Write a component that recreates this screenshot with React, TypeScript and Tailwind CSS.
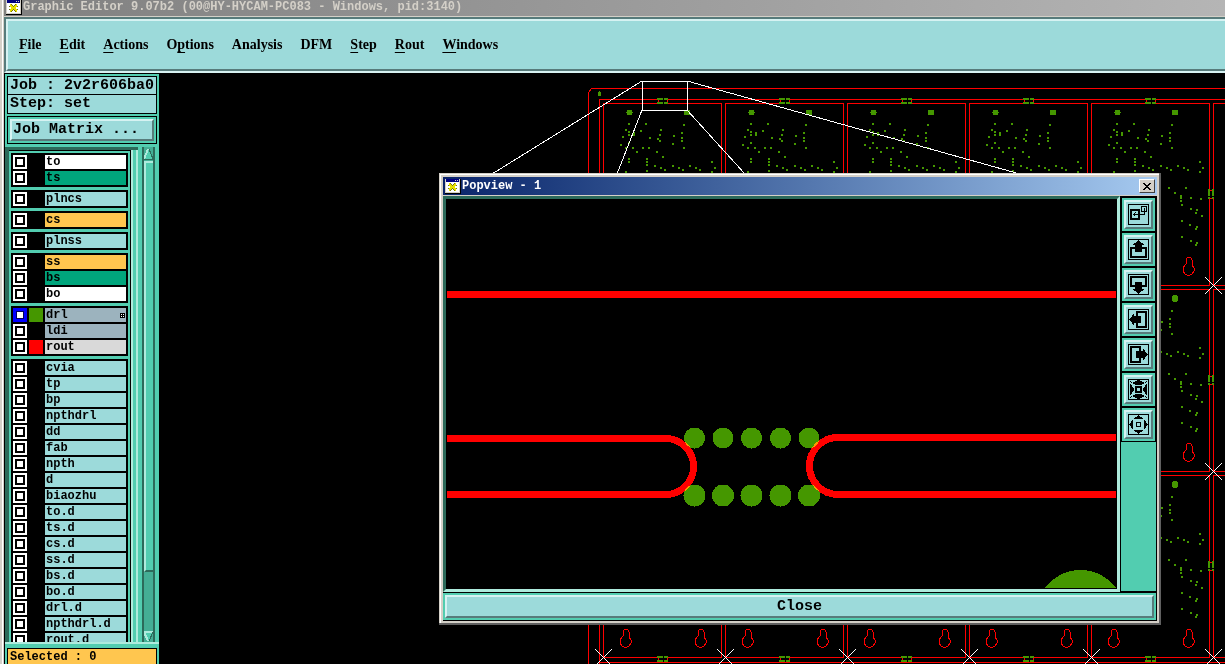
import type { ReactNode } from 'react'

const MONO = "font-['Liberation_Mono',monospace] font-bold"
const BEVEL = 'border-2 border-t-[#d6f2f2] border-l-[#d6f2f2] border-r-[#577b7b] border-b-[#577b7b] bg-[#9cdada]'

const MENU = [
  { label: 'File', mark: 0 },
  { label: 'Edit', mark: 0 },
  { label: 'Actions', mark: 0 },
  { label: 'Options', mark: 1 },
  { label: 'Analysis', mark: -1 },
  { label: 'DFM', mark: -1 },
  { label: 'Step', mark: 0 },
  { label: 'Rout', mark: 0 },
  { label: 'Windows', mark: 0 },
]

type Layer = { name: string; bg?: string; swatch?: string; active?: boolean }

const LAYERS: Layer[][] = [
  [
    { name: 'to', bg: 'bg-white' },
    { name: 'ts', bg: 'bg-[#00a57c]' },
  ],
  [{ name: 'plncs' }],
  [{ name: 'cs', bg: 'bg-[#ffc64f]' }],
  [{ name: 'plnss' }],
  [
    { name: 'ss', bg: 'bg-[#ffc64f]' },
    { name: 'bs', bg: 'bg-[#00a57c]' },
    { name: 'bo', bg: 'bg-white' },
  ],
  [
    { name: 'drl', bg: 'bg-[#9cb3be]', swatch: 'bg-[#459700]', active: true },
    { name: 'ldi', bg: 'bg-[#9cb3be]' },
    { name: 'rout', bg: 'bg-[#d9d9d9]', swatch: 'bg-[#ff0000]' },
  ],
  [
    'cvia', 'tp', 'bp', 'npthdrl', 'dd', 'fab', 'npth', 'd', 'biaozhu', 'to.d', 'ts.d', 'cs.d',
    'ss.d', 'bs.d', 'bo.d', 'drl.d', 'npthdrl.d', 'rout.d',
  ].map((name) => ({ name })),
]

// drill hits of one board, relative to its top left corner (603,103)
const HOLES: [number, number][] = [
  [25, 20], [42, 20], [80, 21], [22, 26], [25, 28], [25, 31], [37, 27], [30, 29], [30, 31], [19, 33],
  [46, 34], [57, 26], [56, 31], [54, 35], [56, 37], [70, 32], [69, 40], [78, 29], [78, 34], [78, 37],
  [17, 41], [25, 39], [22, 44], [29, 44], [39, 44], [45, 44], [80, 44], [33, 48], [53, 48], [59, 53],
  [25, 55], [25, 58], [43, 55], [43, 58], [43, 61], [43, 67], [51, 62], [57, 64], [61, 66], [69, 62],
  [75, 64], [79, 66], [86, 62], [92, 64], [96, 66], [108, 58], [111, 64], [108, 68], [22, 68], [77, 84],
  [83, 89], [94, 84], [89, 92], [89, 94], [89, 97], [90, 101], [99, 94], [109, 95], [99, 105], [105, 106],
  [104, 109], [110, 112], [90, 117], [98, 121], [105, 123], [104, 125], [90, 133], [99, 137], [105, 139], [104, 141],
]

const COLS = [0, 1, 2, 3, 4]
const ROWS = [0, 1, 2]

function Logo() {
  return (
    <svg width="16" height="15" viewBox="0 0 16 15" shapeRendering="crispEdges" className="shrink-0">
      <rect width="16" height="15" fill="#000" />
      <rect width="15" height="14" fill="#d4d0c8" />
      <rect x="1" y="0" width="13" height="3" fill="#000080" />
      <rect x="10" y="1" width="1" height="1" fill="#d4d0c8" />
      <rect x="12" y="1" width="1" height="1" fill="#d4d0c8" />
      <rect x="1" y="3" width="13" height="10" fill="#fff" />
      <path d="M4 5l7 6M11 5l-7 6" stroke="#77770a" strokeWidth="3" />
      <path d="M4 5l7 6M11 5l-7 6" stroke="#e8e000" strokeWidth="2" />
    </svg>
  )
}

function Keyhole({ x, y }: { x: number; y: number }) {
  return (
    <path
      d={`M${x - 3} ${y + 8}v-4l1-2 1-1h2l1 1 1 2v5l2 3v3l-2 3-2 1h-3l-2-1-2-3v-3l2-3z`}
      fill="none"
      stroke="#ff0000"
    />
  )
}

function Board({ x, y, round }: { x: number; y: number; round: boolean }) {
  return (
    <g>
      <rect x={x + 0.5} y={y + 0.5} width="118" height="182" fill="none" stroke="#ff0000" />
      <g fill="#459700">
        <rect x={x + 24} y={y + 7} width="5" height="5" />
        <rect x={x + 23} y={y + 9} width="7" height="1" />
        <rect x={x + 81} y={y + 7} width="6" height="5" />
        {round && <rect x={x + 82} y={y + 6} width="4" height="7" />}
        {HOLES.map(([hx, hy]) => (
          <rect key={`${hx}-${hy}`} x={x + hx} y={y + hy} width="2" height="2" />
        ))}
      </g>
      <Keyhole x={x + 23} y={y + 153} />
      <Keyhole x={x + 98} y={y + 153} />
    </g>
  )
}

function TabH({ x, y }: { x: number; y: number }) {
  return (
    <g>
      <rect x={x} y={y} width="11" height="6" fill="#000" />
      <path d={`M${x + 1} ${y + 2}h1v2h-1zM${x + 10} ${y + 2}h1v2h-1z`} fill="#ff0000" />
      <path d={`M${x} ${y}h6v2h-6zM${x + 7} ${y}h4v2h-4zM${x} ${y + 4}h6v2h-6zM${x + 7} ${y + 4}h4v2h-4z`} fill="#459700" />
    </g>
  )
}

function TabV({ x, y }: { x: number; y: number }) {
  return (
    <g>
      <rect x={x} y={y} width="6" height="10" fill="#000" />
      <path d={`M${x + 2} ${y + 1}h2v1h-2zM${x + 2} ${y + 9}h2v1h-2z`} fill="#ff0000" />
      <path d={`M${x} ${y}h2v7h-2zM${x + 4} ${y}h2v7h-2zM${x} ${y + 8}h2v2h-2zM${x + 4} ${y + 8}h2v2h-2z`} fill="#459700" />
    </g>
  )
}

function Cross({ x, y }: { x: number; y: number }) {
  return <path d={`M${x - 8} ${y - 8}l17 17M${x + 9} ${y - 8}l-17 17`} stroke="#fff" />
}

function PanelDrawing() {
  return (
    <svg
      className="absolute inset-0 h-full w-full"
      viewBox="159 73 1066 591"
      preserveAspectRatio="xMinYMin slice"
      shapeRendering="crispEdges"
    >
      <path d="M588.5 664V92.5l3-4H1225" fill="none" stroke="#ff0000" />
      <path d="M599.5 664V99.5H1225M599 662.5H1225M1225 103.5H1213.5V285M1225 289.5H1213.5V471M1225 475.5H1213.5V657" fill="none" stroke="#ff0000" />
      <path d="M1213 285.5H1225M1213 471.5H1225M1213 657.5H1225" stroke="#ff0000" />
      <path d="M598 92h3v4h-3zM599 91h1v1h-1z" fill="#459700" />
      {ROWS.map((r) => COLS.map((c) => <Board key={`${r}-${c}`} x={603 + c * 122} y={103 + r * 186} round={r > 0} />))}
      {COLS.map((c) => (
        <g key={c}>
          <TabH x={657 + c * 122} y={98} />
          <TabH x={657 + c * 122} y={656} />
          <Cross x={603 + c * 122} y={657} />
        </g>
      ))}
      {ROWS.map((r) => (
        <g key={r}>
          <TabV x={1208} y={189 + r * 186} />
          <Cross x={1213} y={285 + r * 186} />
        </g>
      ))}
      <g fill="none" stroke="#fff">
        <rect x="642.5" y="81.5" width="45" height="29" />
        <path d="M642 81L492 174M642 110L617 174M687 110L745 174M687 81L1020 174" />
      </g>
    </svg>
  )
}

function PopDrawing() {
  const xs = [694.5, 723, 751.5, 780.5, 809]
  return (
    <svg
      className="block min-w-0 flex-1"
      height="390"
      viewBox="446 199 671 390"
      preserveAspectRatio="xMinYMin slice"
      shapeRendering="crispEdges"
    >
      <rect x="446" y="199" width="671" height="390" fill="#000" />
      <g fill="#459700">
        {xs.map((x) => (
          <g key={x}>
            <circle cx={x} cy="438" r="10.5" />
            <circle cx={x} cy="495.5" r="11" />
          </g>
        ))}
        <path d="M1045 588A44 44 0 0 1 1116 588z" />
      </g>
      <g fill="none" stroke="#ff0000" strokeWidth="7" className="mix-blend-screen">
        <path d="M447 294.5H1116" />
        <path d="M447 438.5H665.5A28 28 0 0 1 665.5 494.5H447" />
        <path d="M1116 437.5H838A28.5 28.5 0 0 0 838 494.5H1116" />
      </g>
    </svg>
  )
}

const TOOLS: { label: string; art: ReactNode }[] = [
  {
    label: 'Popview',
    art: (
      <>
        <path d="M3 6h8v9h-8z" fill="none" stroke="#000" strokeWidth="2" />
        <path d="M13.5 2.5h5v5h-5zM16.5 4v6.5H5M7.5 8.5l-2 2 2 2" fill="none" stroke="#000" />
      </>
    ),
  },
  {
    label: 'Pan up',
    art: <path d="M2 8h5v2h-3v7h13v-7h-3V8h5v11H2zM10 1h1v1h1v1h1v1h2v1h1v1h-2v7H7V6H5V5h1V4h2V3h1V2h1z" />,
  },
  {
    label: 'Pan down',
    art: <path d="M2 2h17v11h-5v-2h3V4H4v7h3v2H2zM7 8h7v7h2v1h-1v1h-2v1h-1v1h-1v1h-1v-1H9v-1H8v-1H6v-1H5v-1h2z" />,
  },
  {
    label: 'Pan left',
    art: <path d="M8 2h11v17H8v-5h2v3h7V4h-7v3H8zM13 7v7H6v2H5v-1H4v-2H3v-1H2v-1H1v-1h1V9h1V8h1V6h1V5h1v2z" />,
  },
  {
    label: 'Pan right',
    art: <path d="M2 2h11v5h-2V4H4v13h7v-3h2v5H2zM8 7h7V5h1v1h1v2h1v1h1v1h1v1h-1v1h-1v1h-1v2h-1v1h-1v-2H8z" />,
  },
  {
    label: 'Zoom in',
    art: (
      <>
        <path d="M8 8h5v5H8z" fill="none" stroke="#000" strokeWidth="2" />
        <path d="M9 1h3v1h2v1h2v2h-2v1h-7V5H5V3h2V2h2zM9 20h3v-1h2v-1h2v-2h-2v-1h-7v1H5v2h2v1h2zM2 5h1v1h1v2h1v1h1v3H5v1H4v2H3v1H2zM19 5h-1v1h-1v2h-1v1h-1v3h1v1h1v2h1v1h1z" />
        <path d="M2 2h1v1H2zM3 3h1v1H3zM18 2h1v1h-1zM17 3h1v1h-1zM2 18h1v1H2zM3 17h1v1H3zM18 18h1v1h-1zM17 17h1v1h-1z" />
      </>
    ),
  },
  {
    label: 'Zoom out',
    art: (
      <>
        <path d="M8.5 8.5h4v4h-4z" fill="none" stroke="#000" />
        <path d="M10 1h1v1h1v1h2v1h1v1H6V4h1V3h2V2h1zM10 20h1v-1h1v-1h2v-1h1v-1H6v1h1v1h2v1h1zM1 10v1h1v1h1v2h1v1h1V6H4v1H3v2H2v1zM20 10v1h-1v1h-1v2h-1v1h-1V6h1v1h1v2h1v1z" />
      </>
    ),
  },
]

function LayerRow({ layer }: { layer: Layer }) {
  return (
    <label className="flex h-[14px] gap-[2px]">
      <input
        type="checkbox"
        className={
          layer.active
            ? 'size-[14px] shrink-0 appearance-none border-[3px] border-[#0000ff] bg-white shadow-[inset_0_0_0_1px_#000060]'
            : 'size-[14px] shrink-0 appearance-none border-2 border-white bg-white shadow-[inset_0_0_0_2px_#000]'
        }
      />
      <span className={`w-[14px] shrink-0 ${layer.swatch ?? 'bg-black'}`} />
      <span className={`flex flex-1 items-center justify-between pr-px pl-px text-[12px] leading-[14px] ${layer.bg ?? 'bg-[#9cdada]'}`}>
        {layer.name}
        {layer.active && (
          <svg width="5" height="5" viewBox="0 0 5 5" shapeRendering="crispEdges">
            <path d="M0 0h5v5H0z" />
            <path d="M1 1h1v1H1zM3 1h1v1H3zM1 3h1v1H1zM3 3h1v1H3z" fill="#fff" />
          </svg>
        )}
      </span>
    </label>
  )
}

function Sidebar() {
  return (
    <aside className={`flex w-[154px] shrink-0 flex-col overflow-hidden bg-[#52cdb0] text-black ${MONO}`}>
      <div className="mx-[2px] mt-[2px] text-[15px] leading-[18px]">
        <div className="border border-black bg-[#9cdada] pl-[2px] leading-[17px] whitespace-nowrap">Job : 2v2r606ba0</div>
        <div className="border border-t-0 border-black bg-[#9cdada] pl-[2px]">Step: set</div>
        <div className="mt-[2px] border border-black p-[2px]">
          <button className={`block w-full pl-px text-left ${BEVEL}`}>Job Matrix ...</button>
        </div>
      </div>

      <div className="mt-[3px] flex min-h-0 flex-1 border-b-2 border-[#aeebdd]">
        <div className="flex min-w-0 flex-1 border-t-3 border-l-4 border-[#2c6a5a]">
          <div className="min-w-0 flex-1 overflow-hidden border-t border-r border-black pt-[2px] pr-[2px] pl-[2px]">
            <div className="flex flex-col gap-[3px]">
              {LAYERS.map((group) => (
                <div key={group[0].name} className="flex flex-col gap-[2px] bg-black p-[2px]">
                  {group.map((layer) => (
                    <LayerRow key={layer.name} layer={layer} />
                  ))}
                </div>
              ))}
            </div>
          </div>
          <div className="w-[7px] border-x-2 border-[#aeebdd]" />
        </div>
        <div className="ml-1 flex w-[13px] flex-col border-x-2 border-[#2c6a5a] bg-[#44ae95]">
          <svg className="shrink-0" width="9" height="14" viewBox="0 0 9 14" shapeRendering="crispEdges">
            <path d="M4 2L0 12h9z" fill="#52cdb0" />
            <path d="M4 2L0 12" stroke="#aeebdd" strokeWidth="2" />
            <path d="M5 2l4 10H0" fill="none" stroke="#2c6a5a" />
          </svg>
          <div className="h-[83%] border-t-2 border-b-2 border-l-2 border-t-[#aeebdd] border-b-[#2c6a5a] border-l-[#aeebdd] bg-[#52cdb0]" />
          <svg className="mt-auto shrink-0" width="9" height="11" viewBox="0 0 9 11" shapeRendering="crispEdges">
            <path d="M0 1h9L5 10z" fill="#52cdb0" />
            <path d="M9 1H0l4 9" fill="none" stroke="#aeebdd" strokeWidth="2" />
            <path d="M9 1L5 10" stroke="#2c6a5a" />
          </svg>
        </div>
        <div className="w-1" />
      </div>

      <div className="mx-[2px] mt-1 h-4 shrink-0 border border-b-0 border-black bg-[#ffc64f] pl-[2px] text-[12px] leading-4">
        Selected : 0
      </div>
    </aside>
  )
}

function Popview() {
  return (
    <section className="absolute top-[100px] left-[280px] flex w-[722px] flex-col border-r-2 border-b-2 border-[#606060] bg-[#d4d0c8] shadow-[inset_1px_1px_0_#d4d0c8,inset_2px_2px_0_#fff]">
      <header className="mx-1 mt-1 mr-[2px] flex h-[18px] items-center bg-linear-to-r from-[#0a246a] to-[#a6caf0] pl-[2px]">
        <Logo />
        <h2 className={`ml-px flex-1 text-[12px] leading-[18px] text-white ${MONO}`}>Popview - 1</h2>
        <button
          aria-label="Close window"
          className="mr-[2px] flex h-[14px] w-4 items-center justify-center border border-t-white border-r-[#404040] border-b-[#404040] border-l-white bg-[#d4d0c8]"
        >
          <svg width="8" height="7" viewBox="0 0 8 7" shapeRendering="crispEdges">
            <path d="M0 0h2v1h1v1h2V1h1V0h2v1H7v1H6v1H5v1h1v1h1v1h1v1H6V6H5V5H3v1H2v1H0V6h1V5h1V4h1V3H2V2H1V1H0z" />
          </svg>
        </button>
      </header>
      <div className="mt-px mr-[2px] mb-[2px] ml-1 bg-black">
        <div className="flex">
          <div className="flex min-w-0 flex-1 border-3 border-t-[#2c6a5a] border-r-[#aeebdd] border-b-[#aeebdd] border-l-[#2c6a5a]">
            <PopDrawing />
          </div>
          <div className="mr-px ml-px flex w-[35px] flex-col pt-[2px]">
            <div className="flex flex-col gap-[2px] px-px">
              {TOOLS.map((tool) => (
                <button key={tool.label} aria-label={tool.label} className="block border-2 border-[#52cdb0]">
                  <span className={`block p-[2px] ${BEVEL}`}>
                    <svg width="21" height="21" viewBox="0 0 21 21" shapeRendering="crispEdges">
                      <path d="M.5.5h20v20H.5z" fill="none" stroke="#000" />
                      {tool.art}
                    </svg>
                  </span>
                </button>
              ))}
            </div>
            <div className="mt-px mb-px flex-1 bg-[#52cdb0]" />
          </div>
        </div>
        <div className="mt-px mr-px mb-px bg-[#52cdb0] p-[2px]">
          <button className={`block w-full text-center text-[15px] leading-[19px] text-black ${MONO} ${BEVEL}`}>Close</button>
        </div>
      </div>
    </section>
  )
}

export default function App() {
  return (
    <div className="flex h-screen overflow-hidden bg-black">
      <div className="w-1 shrink-0 border-r border-l-2 border-[#d4d0c8] bg-white" />
      <div className="flex min-w-0 flex-1 flex-col">
        <header className="flex h-[17px] shrink-0 items-start border-b border-[#d4d0c8] bg-linear-to-r from-[#808080] to-[#b5b5b5] pl-[2px]">
          <Logo />
          <h1 className={`ml-px text-[12px] leading-[15px] whitespace-nowrap text-[#d4d0c8] ${MONO}`}>
            Graphic Editor 9.07b2 (00@HY-HYCAM-PC083 - Windows, pid:3140)
          </h1>
        </header>
        <div className="shrink-0 border-t-2 border-b-2 border-l-2 border-t-[#577b7b] border-b-[#d6f2f2] border-l-[#577b7b]">
          <nav className="flex h-[52px] items-center gap-[18px] border-t-2 border-b-2 border-l-2 border-t-[#d6f2f2] border-b-[#577b7b] border-l-[#d6f2f2] bg-[#9cdada] pb-[2px] pl-[11px] font-['Liberation_Serif',serif] text-[14px] font-bold text-black">
            {MENU.map(({ label, mark }) => (
              <button key={label} className="whitespace-nowrap">
                {mark < 0 ? (
                  label
                ) : (
                  <>
                    {label.slice(0, mark)}
                    <span className="underline decoration-1 underline-offset-3">{label[mark]}</span>
                    {label.slice(mark + 1)}
                  </>
                )}
              </button>
            ))}
          </nav>
        </div>
        <div className="flex min-h-0 flex-1 pt-px pl-px">
          <Sidebar />
          <main className="relative -mt-px min-w-0 flex-1 overflow-hidden bg-black">
            <PanelDrawing />
            <Popview />
          </main>
        </div>
      </div>
    </div>
  )
}
